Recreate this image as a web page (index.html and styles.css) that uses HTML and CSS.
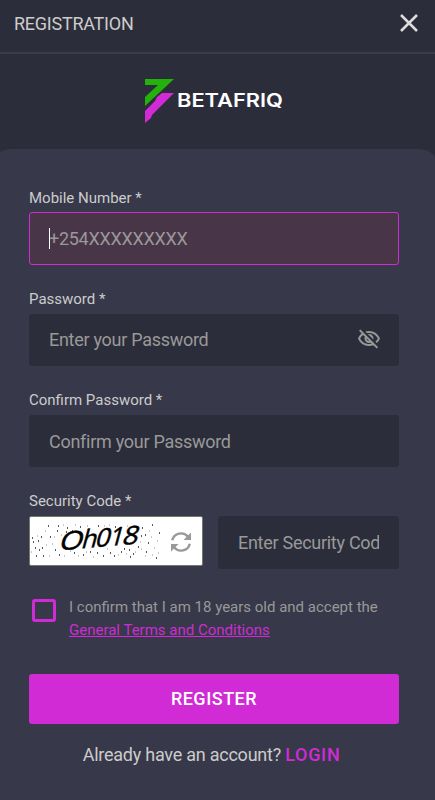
FILE: index.html
```html
<!DOCTYPE html>
<html lang="en">
<head>
	<meta charset="UTF-8">
	<title>Registration</title>
	<link rel="stylesheet" href="styles.css">
</head>
<body>
	<header class="header">
		<h1>REGISTRATION</h1>
		<button type="button" class="close" aria-label="Close">
			<svg width="20" height="20" viewBox="0 0 20 20"><path d="M2 2L18 18M18 2L2 18"/></svg>
		</button>
	</header>
	<div class="logo">
		<svg width="140" height="48" viewBox="0 0 140 48">
			<path fill="#23b20b" d="M2 2H31L2 29V20L15 8H2z"/>
			<path fill="#d02bd4" d="M19 16H31L9 38L8 41L2 46V34L12 24L14 20z"/>
			<text class="brand" x="34" y="30" textLength="106" lengthAdjust="spacingAndGlyphs">BETAFRIQ</text>
		</svg>
	</div>
	<form class="card">
		<div class="field">
			<label for="mobile">Mobile Number *</label>
			<div class="control">
				<input class="focused" type="text" id="mobile" placeholder="+254XXXXXXXXX">
				<span class="caret"></span>
			</div>
		</div>
		<div class="field">
			<label for="password">Password *</label>
			<div class="control">
				<input type="password" id="password" placeholder="Enter your Password">
				<svg class="eye" width="24" height="24" viewBox="0 0 24 24"><path d="M12 6c3.79 0 7.17 2.13 8.82 5.5-.59 1.22-1.42 2.27-2.41 3.12l1.41 1.41c1.39-1.23 2.49-2.77 3.18-4.53C21.27 7.11 17 4 12 4c-1.27 0-2.49.2-3.64.57l1.65 1.65C10.66 6.09 11.32 6 12 6zm-1.07 1.14L13 9.21c.57.25 1.03.71 1.28 1.28l2.07 2.07c.08-.34.14-.7.14-1.07C16.5 9.01 14.48 7 12 7c-.37 0-.72.05-1.07.14zM2.01 3.87l2.68 2.68C3.06 7.83 1.77 9.53 1 11.5 2.73 15.89 7 19 12 19c1.52 0 2.98-.29 4.32-.82l3.42 3.42 1.41-1.41L3.42 2.45 2.01 3.87zm7.5 7.5l2.61 2.61c-.04.01-.08.02-.12.02-1.38 0-2.5-1.12-2.5-2.5 0-.05.01-.08.01-.13zm-3.4-3.4l1.75 1.75c-.23.55-.36 1.15-.36 1.78 0 2.48 2.02 4.5 4.5 4.5.63 0 1.23-.13 1.77-.36l.98.98c-.88.24-1.8.38-2.75.38-3.79 0-7.17-2.13-8.82-5.5.7-1.43 1.72-2.61 2.93-3.53z"/></svg>
			</div>
		</div>
		<div class="field">
			<label for="confirm">Confirm Password *</label>
			<div class="control">
				<input type="password" id="confirm" placeholder="Confirm your Password">
			</div>
		</div>
		<div class="field">
			<label for="code">Security Code *</label>
			<div class="security">
				<div class="captcha">
					<svg width="136" height="48" viewBox="0 0 136 48">
						<path class="noise" d="M2 21h1M3 25h1M5 31h1M8 24h1M11 20h1M9 33h1M12 31h1M6 39h1M13 39h1M18 9h1M20 20h1M28 9h1M27 14h1M37 11h1M36 15h1M25 33h1M29 38h1M44 36h1M42 14h1M50 10h1M53 38h1M60 35h1M67 36h1M73 39h1M68 9h1M80 36h1M85 10h1M84 39h1M91 35h1M94 32h1M99 33h1M103 37h1M107 10h1M112 11h1M111 19h1M115 18h1M118 26h1M122 8h1M108 30h1M116 35h1M126 41h1M129 16h1M100 40h1"/>
						<path class="noise small" d="M7 19h1M1 35h1M16 28h1M15 14h1M22 27h1M24 20h1M19 39h1M34 39h1M31 18h1M33 8h1M48 39h1M40 34h1M45 8h1M57 9h1M56 35h1M63 40h1M74 9h1M77 32h1M79 8h1M88 38h1M97 9h1M96 37h1M105 35h1M111 32h1M115 39h1M119 14h1M121 20h1M124 31h1M122 38h1M127 24h1M128 36h1M110 25h1"/>
						<g class="captcha-text" transform="translate(28 33.5) rotate(-5) skewX(-20)">
							<text textLength="24" lengthAdjust="spacingAndGlyphs">O</text>
							<text x="22.5">h</text>
							<text x="36.5" textLength="15" lengthAdjust="spacingAndGlyphs">0</text>
							<text x="50.5">1</text>
							<text x="63.5" textLength="16" lengthAdjust="spacingAndGlyphs">8</text>
						</g>
					</svg>
					<svg class="refresh" width="22" height="22" viewBox="0 0 22 22">
						<path class="arc" d="M2.2 9.3C4 1.8 13.4 0 18.2 6M19.8 12.7C18 20.2 8.6 22 3.8 16"/>
						<path class="tip" d="M21 1.5V9H13.5zM1 20.5V13H8.5z"/>
					</svg>
				</div>
				<input type="text" id="code" placeholder="Enter Security Code">
			</div>
		</div>
		<div class="terms">
			<span class="checkbox"></span>
			<p>I confirm that I am 18 years old and accept the<br><a href="#">General Terms and Conditions</a></p>
		</div>
		<button type="button" class="register">REGISTER</button>
		<p class="login">Already have an account? <a href="#">LOGIN</a></p>
	</form>
</body>
</html>
```
FILE: styles.css
```css
* {
	box-sizing: border-box;
}
body {
	margin: 0;
	height: 800px;
	overflow: hidden;
	display: flex;
	flex-direction: column;
	background: #2c2d3a;
	color: #ccc;
	font-family: Roboto, sans-serif;
}
.header {
	display: flex;
	align-items: center;
	justify-content: space-between;
	height: 54px;
	padding: 0 16px 6px 14px;
	border-bottom: 2px solid #3b3c4a;
}
.header h1 {
	margin: 0;
	font-size: 18px;
	font-weight: 400;
	letter-spacing: -.25px;
}
.close {
	display: flex;
	padding: 0;
	border: 0;
	background: none;
}
.close path {
	stroke: #ddd;
	stroke-width: 2.5;
}

/* logo */
.logo {
	height: 95px;
	padding: 23px 0 0 143px;
}
.brand {
	fill: #fff;
	font-family: Inter, sans-serif;
	font-size: 19px;
	font-weight: 600;
}

/* form */
.card {
	flex: 1;
	margin: 0 -4px 0 -9px;
	padding: 38.8px 40px 0 38px;
	border-radius: 20px 20px 0 0;
	background: #373849;
}
.field {
	height: 101.2px;
}
.field label {
	display: block;
	height: 24.6px;
	font-size: 15px;
	line-height: 20px;
}
.control {
	position: relative;
}
input {
	display: block;
	width: 100%;
	height: 52.5px;
	padding: 0 19px;
	border: 1px solid #2c2d3a;
	border-radius: 3px;
	outline: none;
	background: #2c2d3a;
	color: #fff;
	font-family: inherit;
	font-size: 18px;
	letter-spacing: -.28px;
}
input::placeholder {
	color: #999;
}
input.focused {
	border-color: #d02bd4;
	background: #483648;
}
.caret {
	position: absolute;
	left: 20px;
	top: 16px;
	width: 1px;
	height: 21px;
	background: #fff;
}
.eye {
	position: absolute;
	right: 18px;
	top: 13px;
	fill: #999;
}

/* security code */
.security {
	display: flex;
	justify-content: space-between;
}
.security input {
	width: 181px;
	height: 53px;
}
.captcha {
	display: flex;
	align-items: center;
	width: 174px;
	height: 50px;
	border: 1px solid #77776f;
	border-radius: 2px;
	background: #fff;
}
.noise {
	stroke: #222;
	stroke-width: 1.3;
}
.small {
	stroke: #777;
	stroke-width: .8;
}
.captcha-text {
	fill: #000;
	stroke: #000;
	stroke-width: .5;
	font-family: "Open Sans", sans-serif;
	font-size: 25px;
	font-weight: 400;
}
.refresh {
	margin: 2px 0 0 4px;
}
.arc {
	fill: none;
	stroke: #999;
	stroke-width: 2.4;
}
.tip {
	fill: #999;
}

/* terms */
.terms {
	display: flex;
	margin-top: 3px;
	color: #999;
	font-size: 15px;
	line-height: 23px;
}
.terms p {
	margin: 0;
}
.checkbox {
	width: 24px;
	height: 23px;
	margin: 3px 13px 0 3px;
	border: 3px solid #d02bd4;
	border-radius: 3px;
}
a {
	color: #d02bd4;
}
.register {
	display: block;
	width: 100%;
	height: 50px;
	margin-top: 32.2px;
	border: 0;
	border-radius: 3px;
	background: #d02bd4;
	color: #fff;
	font-family: inherit;
	font-size: 18px;
	font-weight: 500;
	letter-spacing: .5px;
}
.login {
	margin: 20px 0 0;
	padding-right: 5px;
	font-size: 18px;
	line-height: 22px;
	letter-spacing: -.24px;
	text-align: center;
}
.login a {
	font-weight: 500;
	letter-spacing: .7px;
	text-decoration: none;
}
```
